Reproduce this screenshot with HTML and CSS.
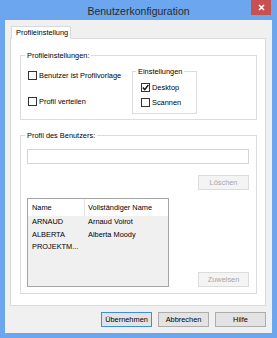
FILE: index.html
```html
<!DOCTYPE html>
<html lang="de">
<head>
  <meta charset="UTF-8">
  <title>Benutzerkonfiguration</title>
  <link rel="stylesheet" href="styles.css">
</head>
<body>

  <div class="window">
    <!-- Titelleiste -->
    <div class="titlebar">
      <div class="title">Benutzerkonfiguration</div>
      <div class="close">
        <svg width="7" height="7" viewBox="0 0 7 7">
          <path d="M1 1 L6 6 M6 1 L1 6" stroke="#fff" stroke-width="1.6" fill="none"/>
        </svg>
      </div>
    </div>

    <div class="client">
      <div class="tabs">
        <div class="tab active">Profileinstellung</div>
      </div>

      <div class="tabpage">
        <fieldset class="group group-profile">
          <legend>Profileinstellungen:</legend>
          <div class="profile-row">
            <div class="checks">
              <label class="check"><span class="box"></span>Benutzer ist Profilvorlage</label>
              <label class="check check-second"><span class="box"></span>Profil verteilen</label>
            </div>
            <fieldset class="group group-settings">
              <legend>Einstellungen</legend>
              <label class="check">
                <span class="box">
                  <svg width="7" height="7" viewBox="0 0 7 7">
                    <path d="M0.8 3.6 L2.7 5.6 L6.3 1" stroke="#111" stroke-width="1.4" fill="none"/>
                  </svg>
                </span>Desktop
              </label>
              <label class="check check-gap"><span class="box"></span>Scannen</label>
            </fieldset>
          </div>
        </fieldset>

        <fieldset class="group group-user">
          <legend>Profil des Benutzers:</legend>
          <div class="textbox"></div>
          <div class="actions">
            <button class="btn" disabled>Löschen</button>
          </div>
          <div class="list-row">
            <div class="listview">
              <div class="lv-head">
                <div class="col-name">Name</div>
                <div class="col-full">Vollständiger Name</div>
              </div>
              <div class="lv-row"><div class="col-name">ARNAUD</div><div class="col-full">Arnaud Voirot</div></div>
              <div class="lv-row"><div class="col-name">ALBERTA</div><div class="col-full">Alberta Moody</div></div>
              <div class="lv-row"><div class="col-name">PROJEKTM...</div><div class="col-full"></div></div>
            </div>
            <button class="btn" disabled>Zuweisen</button>
          </div>
        </fieldset>
      </div>

      <div class="dialog-buttons">
        <button class="btn default">Übernehmen</button>
        <button class="btn">Abbrechen</button>
        <button class="btn">Hilfe</button>
      </div>
    </div>
  </div>

</body>
</html>
```

FILE: styles.css
```css
body {
  margin: 0;
  font-family: "Liberation Sans", Arial, sans-serif;
  font-size: 7.4px;
  color: #000;
}

.window {
  width: 277px;
  height: 338px;
  box-sizing: border-box;
  background-color: #6ba6ee;
  padding: 0 5px 5px 5px;
  display: flex;
  flex-direction: column;
}

/* Titelleiste */
.titlebar {
  height: 20px;
  display: flex;
  align-items: flex-start;
}

.title {
  flex: 1;
  padding-left: 21px;
  text-align: center;
  font-size: 10.5px;
  line-height: 22px;
  color: #2b2b2b;
}

.close {
  width: 20px;
  height: 15px;
  margin-right: 1px;
  background-color: #c75050;
  display: flex;
  align-items: center;
  justify-content: center;
}

.client {
  flex: 1;
  background-color: #f0f0f0;
  padding: 6px 6px 6px 5px;
  display: flex;
  flex-direction: column;
}

/* Register */
.tabs {
  display: flex;
  height: 13px;
  margin-bottom: -1px;
  padding-left: 1px;
}

.tab {
  position: relative;
  z-index: 1;
  width: 60px;
  box-sizing: border-box;
  border: 1px solid #d9d9d9;
  border-bottom: none;
  background-color: #fff;
  padding-left: 4px;
  line-height: 12px;
}

.tabpage {
  border: 1px solid #d9d9d9;
  background-color: #fff;
  padding: 11px 8px 11px 9px;
}

/* Gruppen */
.group {
  margin: 0;
  border: 1px solid #dcdcdc;
  min-width: 0;
}

.group legend {
  padding: 0 2px;
  line-height: 11px;
}

.group-profile {
  padding: 5px 7px 5px 7px;
}

.group-profile > legend {
  margin-left: -3px;
}

.profile-row {
  display: grid;
  grid-template-columns: 104px 65px;
  align-items: start;
}

.checks {
  padding-top: 4px;
  display: flex;
  flex-direction: column;
}

.check {
  display: flex;
  align-items: center;
  height: 11px;
  white-space: nowrap;
}

.check-second {
  margin-top: 15px;
}

.check-gap {
  margin-top: 4px;
}

.box {
  width: 9px;
  height: 9px;
  box-sizing: border-box;
  border: 1px solid #333;
  background-color: #fff;
  margin-right: 2px;
  display: flex;
  align-items: center;
  justify-content: center;
}

.group-settings {
  box-sizing: border-box;
  width: 65px;
  padding: 5px 4px 5px 8px;
}

.group-settings > legend {
  margin-left: -5px;
}

.group-user {
  margin-top: 10px;
  padding: 8px 7px 6px 6px;
}

.group-user > legend {
  margin-left: -2px;
}

.textbox {
  height: 15px;
  box-sizing: border-box;
  border: 1px solid #d5d5d5;
  background-color: #fff;
}

.actions {
  display: flex;
  justify-content: flex-end;
  margin-top: 11px;
}

.list-row {
  display: flex;
  justify-content: space-between;
  align-items: flex-end;
  margin-top: 8px;
}

/* Liste */
.listview {
  width: 142px;
  height: 89px;
  box-sizing: border-box;
  border: 1px solid #a5a5a5;
  background-color: #f0f0f0;
}

.lv-head {
  display: flex;
  height: 17px;
  line-height: 17px;
  background-color: #fff;
}

.lv-head .col-name {
  border-right: 1px solid #e5e5e5;
}

.lv-row {
  display: flex;
  line-height: 12.5px;
}

.col-name {
  width: 57px;
  box-sizing: border-box;
  padding-left: 4px;
  white-space: nowrap;
}

.col-full {
  padding-left: 3px;
  white-space: nowrap;
}

/* Schaltflächen */
.btn {
  width: 51px;
  height: 15px;
  box-sizing: border-box;
  padding: 0;
  font: inherit;
  color: #000;
  background-color: #e3e3e3;
  border: 1px solid #adadad;
}

.btn:disabled {
  color: #a6a6a6;
  background-color: #f4f4f4;
  border-color: #dcdcdc;
}

.btn.default {
  border-color: #3c8ee5;
}

.dialog-buttons {
  display: flex;
  justify-content: flex-end;
  gap: 6px;
  margin-top: 6px;
}
```
